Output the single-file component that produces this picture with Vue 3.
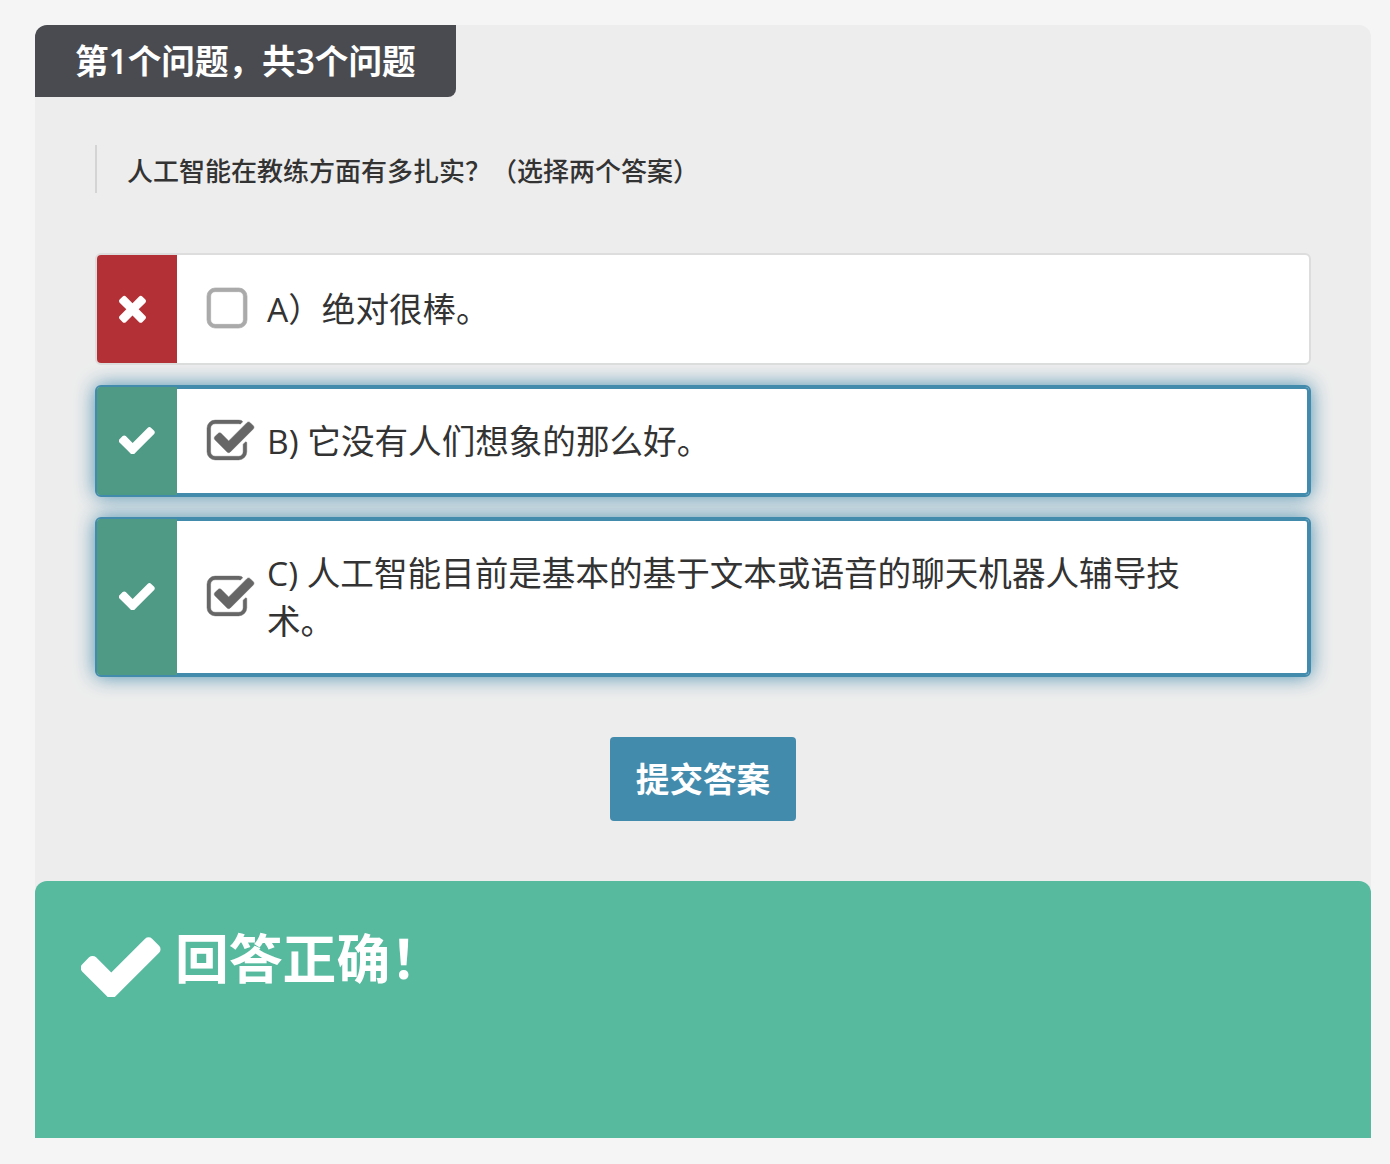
<template>
  <div class="page">
    <section class="quiz">
      <div class="quiz__tab">第1个问题，共3个问题</div>

      <div class="quiz__body">
        <p class="quiz__question">人工智能在教练方面有多扎实？（选择两个答案）</p>

        <ul class="options">
          <li
            v-for="opt in options"
            :key="opt.text"
            class="option"
            :class="{ 'option--selected': opt.selected, 'option--wrong': !opt.correct }"
          >
            <div class="option__mark">
              <svg v-if="opt.correct" class="mark-check" viewBox="128 256 1552 1232">
                <path fill="#fff" :d="ICON_CHECK" />
              </svg>
              <svg v-else class="mark-times" viewBox="214 294 1276 1260">
                <path fill="#fff" :d="ICON_TIMES" />
              </svg>
            </div>
            <div class="option__box">
              <svg v-if="opt.selected" class="box-on" viewBox="64 128 1664 1408">
                <path fill="#666" stroke="#666" stroke-width="16" :d="ICON_CHECKED" />
              </svg>
              <svg v-else class="box-off" viewBox="192 128 1408 1408">
                <path fill="#aaa" stroke="#aaa" stroke-width="24" :d="ICON_SQUARE" />
              </svg>
            </div>
            <div class="option__text">{{ opt.text }}</div>
          </li>
        </ul>

        <div class="quiz__actions">
          <button class="submit" type="button">提交答案</button>
        </div>
      </div>

      <div class="feedback">
        <svg class="feedback__icon" viewBox="128 256 1552 1232">
          <path fill="#fff" :d="ICON_CHECK" />
        </svg>
        <h2 class="feedback__title">回答正确！</h2>
      </div>
    </section>
  </div>
</template>

<script setup>
const ICON_CHECK = 'M1671 566q0 40-28 68l-724 724-136 136q-28 28-68 28t-68-28l-136-136-362-362q-28-28-28-68t28-68l136-136q28-28 68-28t68 28l294 295 656-657q28-28 68-28t68 28l136 136q28 28 28 68z'
const ICON_TIMES = 'M1490 1322q0 40-28 68l-136 136q-28 28-68 28t-68-28l-294-294-294 294q-28 28-68 28t-68-28l-136-136q-28-28-28-68t28-68l294-294-294-294q-28-28-28-68t28-68l136-136q28-28 68-28t68 28l294 294 294-294q28-28 68-28t68 28l136 136q28 28 28 68t-28 68l-294 294 294 294q28 28 28 68z'
const ICON_SQUARE = 'M1312 256h-832q-66 0-113 47t-47 113v832q0 66 47 113t113 47h832q66 0 113-47t47-113v-832q0-66-47-113t-113-47zm288 160v832q0 119-84.5 203.5t-203.5 84.5h-832q-119 0-203.5-84.5t-84.5-203.5v-832q0-119 84.5-203.5t203.5-84.5h832q119 0 203.5 84.5t84.5 203.5z'
const ICON_CHECKED = 'M1472 930v318q0 119-84.5 203.5t-203.5 84.5h-832q-119 0-203.5-84.5t-84.5-203.5v-832q0-119 84.5-203.5t203.5-84.5h832q63 0 117 25 15 7 18 23 3 17-9 29l-49 49q-10 10-23 10-3 0-9-2-23-6-45-6h-832q-66 0-113 47t-47 113v832q0 66 47 113t113 47h832q66 0 113-47t47-113v-254q0-13 9-22l64-64q10-10 23-10 6 0 12 3 20 8 20 29zm231-489l-814 814q-24 24-57 24t-57-24l-430-430q-24-24-24-57t24-57l110-110q24-24 57-24t57 24l263 263 647-647q24-24 57-24t57 24l110 110q24 24 24 57t-24 57z'

const options = [
  { text: 'A）绝对很棒。', selected: false, correct: false },
  { text: 'B) 它没有人们想象的那么好。', selected: true, correct: true },
  { text: 'C) 人工智能目前是基本的基于文本或语音的聊天机器人辅导技术。', selected: true, correct: true }
]
</script>

<style>
body {
  background: #f5f5f5;
}
</style>

<style scoped>
.page {
  padding: 25px 19px 26px 35px;
  font-family: "Open Sans", "Noto Sans CJK SC", sans-serif;
  color: #333;
}

.quiz {
  background: #ededed;
  border-radius: 12px 12px 0 0;
}

.quiz__tab {
  display: inline-block;
  height: 72px;
  padding: 0 40px;
  background: #4a4b50;
  border-radius: 12px 0 8px 0;
  color: #fff;
  font-size: 33.6px;
  font-weight: 600;
  line-height: 72px;
  vertical-align: top;
}

.quiz__body {
  padding: 48px 60px 60px;
}

.quiz__question {
  margin: 0 0 60px;
  padding: 4px 0 0 30px;
  border-left: 2px solid #d4d4d4;
  font-size: 26px;
  font-weight: 500;
  line-height: 44px;
}

.options {
  margin: 0;
  padding: 0;
  list-style: none;
  display: flex;
  flex-direction: column;
  gap: 20px;
}

.option {
  display: flex;
  align-items: stretch;
  background: #fff;
  border: 2px solid #ddd;
  border-radius: 6px;
  overflow: hidden;
  font-size: 33.6px;
  line-height: 48px;
}

.option--selected {
  border-color: #438bad;
  box-shadow: 0 0 20px rgba(67, 139, 173, 0.95), inset 0 0 0 2px #438bad;
}

.option__mark {
  flex: 0 0 80px;
  display: flex;
  align-items: center;
  justify-content: center;
  background: #4e9a84;
}

.option--wrong .option__mark {
  background: #b33136;
}

.mark-check {
  width: 36px;
  height: 29px;
  margin-top: -4px;
}

.mark-times {
  width: 29px;
  height: 29px;
  margin: -2px 0 0 -12px;
}

.option__box {
  flex: 0 0 61px;
  margin-left: 30px;
  display: flex;
  align-items: center;
}

.box-off {
  width: 40px;
  height: 40px;
  margin-top: -2px;
  overflow: visible;
}

.box-on {
  width: 47px;
  height: 40px;
  margin-top: -2px;
  overflow: visible;
}

.option__text {
  flex: 1;
  margin-left: -1px;
  padding: 30px 128px 30px 0;
}

.quiz__actions {
  margin-top: 60px;
  text-align: center;
}

.submit {
  display: inline-block;
  height: 84px;
  padding: 0 26px 4px;
  background: #438bad;
  border: 0;
  border-radius: 4px;
  color: #fff;
  font-family: inherit;
  font-size: 33.6px;
  font-weight: 700;
  vertical-align: top;
}

.feedback {
  display: flex;
  align-items: flex-start;
  height: 257px;
  padding: 46px 46px 0;
  box-sizing: border-box;
  background: #57ba9f;
  border-radius: 12px 12px 0 0;
  color: #fff;
}

.feedback__icon {
  flex: 0 0 80px;
  height: 64px;
  margin: 6px 14px 0 0;
}

.feedback__title {
  margin: 0;
  font-size: 53.8px;
  font-weight: 700;
  line-height: 62px;
}
</style>
